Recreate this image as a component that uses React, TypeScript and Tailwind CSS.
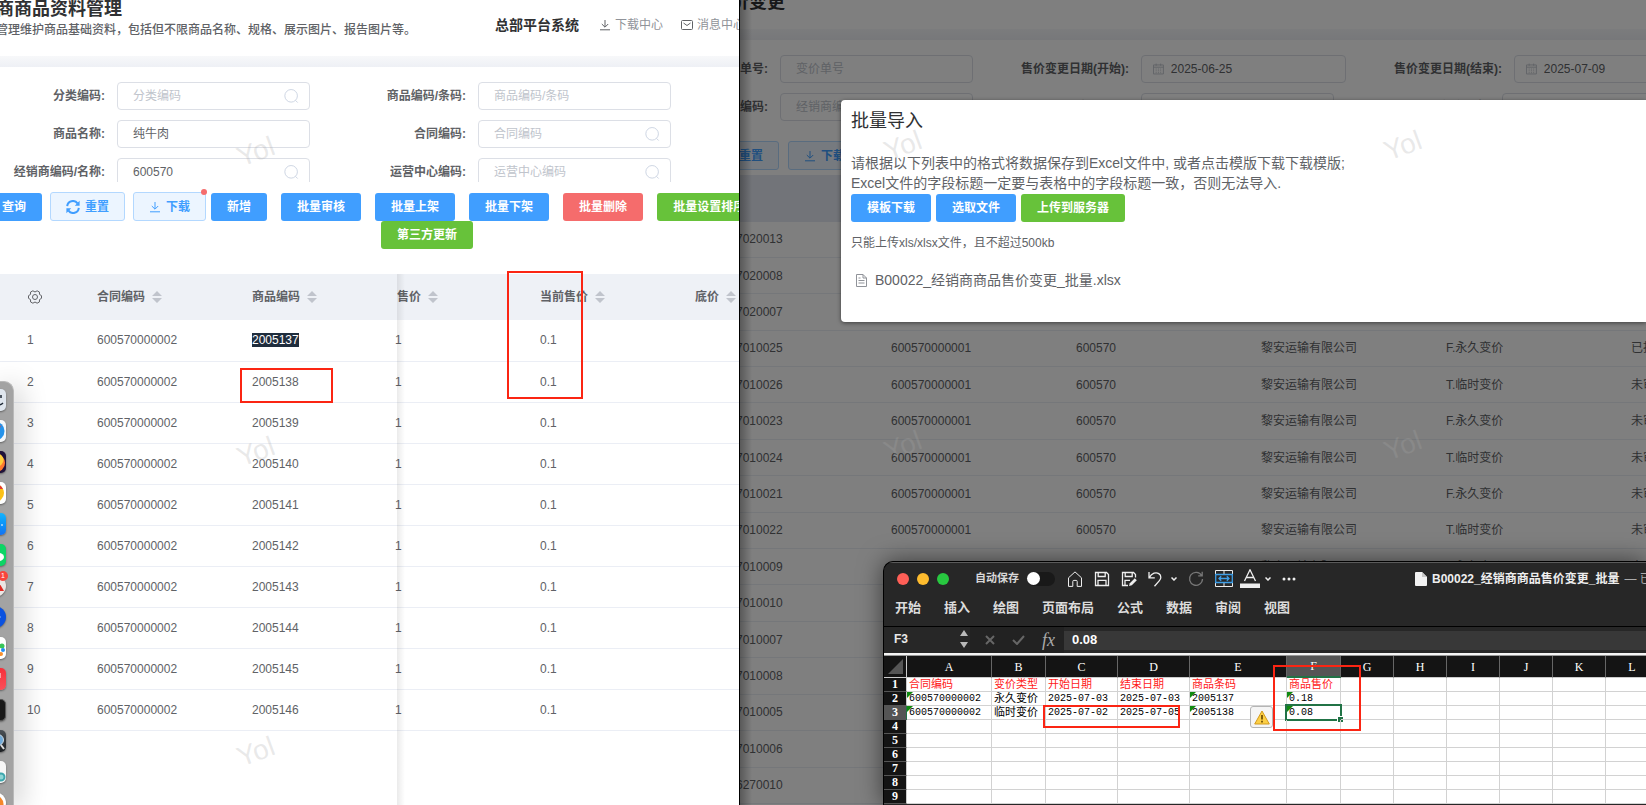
import type { ReactNode } from "react";
import clsx from "clsx";

const goods = [
  "2005137",
  "2005138",
  "2005139",
  "2005140",
  "2005141",
  "2005142",
  "2005143",
  "2005144",
  "2005145",
  "2005146",
];

const priceChanges = [
  { no: "7020013", type: "F.永久变价", status: "未审核" },
  { no: "7020008", type: "F.永久变价", status: "未审核" },
  { no: "7020007", type: "F.永久变价", status: "未审核" },
  { no: "7010025", type: "F.永久变价", status: "已批准" },
  { no: "7010026", type: "T.临时变价", status: "未审核" },
  { no: "7010023", type: "F.永久变价", status: "未审核" },
  { no: "7010024", type: "T.临时变价", status: "未审核" },
  { no: "7010021", type: "F.永久变价", status: "未审核" },
  { no: "7010022", type: "T.临时变价", status: "未审核" },
  { no: "7010009", type: "F.永久变价", status: "未审核" },
  { no: "7010010", type: "F.永久变价", status: "未审核" },
  { no: "7010007", type: "F.永久变价", status: "未审核" },
  { no: "7010008", type: "F.永久变价", status: "未审核" },
  { no: "7010005", type: "F.永久变价", status: "未审核" },
  { no: "7010006", type: "F.永久变价", status: "未审核" },
  { no: "6270010", type: "F.永久变价", status: "未审核" },
];

const ribbonTabs = ["开始", "插入", "绘图", "页面布局", "公式", "数据", "审阅", "视图"];

const sheetColumns = ["A", "B", "C", "D", "E", "F", "G", "H", "I", "J", "K", "L"];
const sheetRows = [
  ["合同编码", "变价类型", "开始日期", "结束日期", "商品条码", "商品售价"],
  ["600570000002", "永久变价", "2025-07-03", "2025-07-03", "2005137", "0.18"],
  ["600570000002", "临时变价", "2025-07-02", "2025-07-05", "2005138", "0.08"],
  [],
  [],
  [],
  [],
  [],
  [],
];

/* ---------- shared parts ---------- */

function SearchIcon() {
  return (
    <svg viewBox="0 0 16 16" className="size-4 fill-none stroke-[#c9d2e0]">
      <circle cx="7.8" cy="7.8" r="6.9" />
      <path d="M12.6 12.8 15 15.2" />
    </svg>
  );
}

function DownloadIcon({ className }: { className?: string }) {
  return (
    <svg viewBox="0 0 12 12" className={clsx("fill-none stroke-current", className)}>
      <path d="M6 1v7M2.8 5 6 8.2 9.2 5M1 10.8h10" />
    </svg>
  );
}

function CalendarIcon() {
  return (
    <svg viewBox="0 0 12 12" className="size-3 fill-none stroke-[#c0c4cc]">
      <path d="M.5 1.5h11v10H.5zM.5 4h11M3.5 0v2.5M8.5 0v2.5" />
      <path d="M3 6h6M3 8h6M3 10h6" strokeDasharray="1 1.5" />
    </svg>
  );
}

function SortIcon() {
  return (
    <svg viewBox="0 0 10 12" className="ml-[7px] h-3 w-[10px] shrink-0 fill-[#c0c4cc]">
      <path d="M5 0l5 5H0zM5 12l5-5H0z" />
    </svg>
  );
}

function Watermark({ className }: { className: string }) {
  return (
    <span
      aria-hidden="true"
      className={clsx(
        "pointer-events-none absolute -rotate-[20deg] text-[28px] leading-8 text-[#a8a8a8]/25",
        className
      )}
    >
      Yol
    </span>
  );
}

type FieldProps = {
  id: string;
  label: string;
  placeholder?: string;
  value?: string;
  search?: boolean;
  date?: boolean;
};

function Field({ id, label, placeholder, value, search, date }: FieldProps) {
  return (
    <div className="flex h-7 items-center justify-end gap-3">
      <label htmlFor={id} className="text-xs font-bold whitespace-nowrap text-[#606266]">
        {label}:
      </label>
      <div
        className={clsx(
          "flex h-7 shrink-0 items-center rounded border border-[#dcdfe6] bg-white pr-[10px]",
          date ? "w-[205px] gap-[7px] pl-[11px]" : "w-[193px] pl-[15px]"
        )}
      >
        {date && <CalendarIcon />}
        <input
          id={id}
          type="text"
          defaultValue={value}
          placeholder={placeholder}
          className="w-full min-w-0 bg-transparent text-xs text-[#606266] outline-none placeholder:text-[#c0c4cc]"
        />
        {search && <SearchIcon />}
      </div>
    </div>
  );
}

type ButtonProps = {
  tone?: "primary" | "danger" | "success";
  children: ReactNode;
};

function Button({ tone = "primary", children }: ButtonProps) {
  return (
    <button
      type="button"
      className={clsx(
        "h-7 shrink-0 rounded-[3px] px-4 text-xs font-bold whitespace-nowrap text-white",
        tone === "primary" && "bg-[#409eff]",
        tone === "danger" && "bg-[#f56c6c]",
        tone === "success" && "bg-[#67c23a]"
      )}
    >
      {children}
    </button>
  );
}

function PlainButton({ children }: { children: ReactNode }) {
  return (
    <button
      type="button"
      className="relative flex h-[29px] shrink-0 items-center gap-[5px] rounded-[3px] border border-[#b3d8ff] bg-[#ecf5ff] px-[15px] text-xs font-bold whitespace-nowrap text-[#409eff]"
    >
      {children}
    </button>
  );
}

function RefreshIcon() {
  return (
    <svg viewBox="0 0 14 14" className="size-[14px] fill-none stroke-current stroke-2">
      <path d="M1.2 6.2A5.7 5.7 0 0 1 11.5 3.4M12.8 7.8A5.7 5.7 0 0 1 2.5 10.6" />
      <path d="M13.6.8v5H8.8zM.4 13.2v-5h4.8z" className="fill-current stroke-none" />
    </svg>
  );
}

/* ---------- goods window ---------- */

function GoodsWindow() {
  return (
    <section className="relative w-[739px] shrink-0 overflow-hidden bg-white">
      <header className="flex h-14 justify-between overflow-hidden">
        <div className="-ml-1 whitespace-nowrap">
          <h1 className="text-lg leading-[18px] font-bold text-[#303133]">商商品资料管理</h1>
          <p className="mt-1 text-xs leading-4 font-medium text-[#606266]">
            管理维护商品基础资料，包括但不限商品名称、规格、展示图片、报告图片等。
          </p>
        </div>
        <nav className="-mr-[6px] flex h-[50px] shrink-0 items-center whitespace-nowrap">
          <strong className="text-sm text-[#303133]">总部平台系统</strong>
          <a href="#download" className="ml-5 flex items-center gap-1 text-xs text-[#909399]">
            <DownloadIcon className="size-3 text-[#606266]" />
            下载中心
          </a>
          <a href="#message" className="ml-[18px] flex items-center gap-1 text-xs text-[#909399]">
            <svg viewBox="0 0 12 10" className="h-[10px] w-3 fill-none stroke-[#606266]">
              <rect x=".5" y=".5" width="11" height="9" rx="1" />
              <path d="M2.5 3 6 5.5 9.5 3" />
            </svg>
            消息中心
          </a>
        </nav>
      </header>
      <div className="h-[11px] bg-linear-to-b from-[#f7f8fa] to-[#eef0f5]" />

      <form className="grid h-[115px] grid-cols-[310px_361px] content-start gap-y-[10px] overflow-hidden pt-[15px]">
        <Field id="category" label="分类编码" placeholder="分类编码" search />
        <Field id="barcode" label="商品编码/条码" placeholder="商品编码/条码" />
        <Field id="name" label="商品名称" value="纯牛肉" />
        <Field id="contract" label="合同编码" placeholder="合同编码" search />
        <Field id="dealer" label="经销商编码/名称" value="600570" search />
        <Field id="center" label="运营中心编码" placeholder="运营中心编码" search />
      </form>

      <div className="mt-[10px] -ml-[14px] flex items-end">
        <div className="mr-[5px] flex items-end gap-2">
          <Button>查询</Button>
          <PlainButton>
            <RefreshIcon />
            重置
          </PlainButton>
          <PlainButton>
            <DownloadIcon className="size-3" />
            下载
            <i className="absolute -top-1 -right-[2px] size-[6px] rounded-full bg-[#f56c6c]" />
          </PlainButton>
        </div>
        <div className="flex gap-[14px]">
          <Button>新增</Button>
          <Button>批量审核</Button>
          <Button>批量上架</Button>
          <Button>批量下架</Button>
          <Button tone="danger">批量删除</Button>
          <Button tone="success">批量设置排序</Button>
        </div>
      </div>
      <div className="pl-[381px]">
        <Button tone="success">第三方更新</Button>
      </div>

      <div className="relative mt-[25px]">
        <table className="w-[840px] table-fixed border-collapse text-left text-xs text-[#606266]">
          <colgroup>
            <col className="w-[87px]" />
            <col className="w-[155px]" />
            <col className="w-[153px]" />
            <col className="w-[135px]" />
            <col className="w-[155px]" />
            <col className="w-[155px]" />
          </colgroup>
          <thead>
            <tr className="h-[46px] bg-[#eef1f6]">
              <th className="pl-7">
                <svg viewBox="0 0 14 14" className="size-[14px] fill-none stroke-[#606266]">
                  <path d="M4.9.8 7 2 9.1.8 11.4 2l.1 2.4 2 1.3v2.6l-2 1.3-.1 2.4-2.3 1.2L7 12l-2.1 1.2L2.6 12l-.1-2.4-2-1.3V5.7l2-1.3L2.6 2z" />
                  <circle cx="7" cy="7" r="2.5" />
                </svg>
              </th>
              {["合同编码", "商品编码"].map((title) => (
                <th key={title} className="pl-[10px]">
                  <span className="flex items-center">
                    {title}
                    <SortIcon />
                  </span>
                </th>
              ))}
              <th className="pl-[2px]">
                <span className="flex items-center">
                  售价
                  <SortIcon />
                </span>
              </th>
              {["当前售价", "底价"].map((title) => (
                <th key={title} className="pl-[10px]">
                  <span className="flex items-center">
                    {title}
                    <SortIcon />
                  </span>
                </th>
              ))}
            </tr>
          </thead>
          <tbody>
            {goods.map((code, index) => (
              <tr key={code} className="h-[41px] border-b border-[#ebeef5]">
                <td className="pl-[27px]">{index + 1}</td>
                <td className="pl-[10px]">600570000002</td>
                <td className="pl-[10px]">
                  <span className={clsx(index === 0 && "bg-[#1f2d3d] text-white")}>{code}</span>
                </td>
                <td>1</td>
                <td className="pl-[10px]">0.1</td>
                <td />
              </tr>
            ))}
          </tbody>
        </table>
        {/* shadow of the fixed columns */}
        <div className="absolute top-0 left-[397px] h-[600px] w-2 bg-linear-to-r from-black/8 to-transparent" />
        <div className="absolute top-[94px] left-60 h-[35px] w-[93px] border-2 border-[#fb2513]" />
        <div className="absolute -top-[3px] left-[507px] h-32 w-[76px] border-2 border-[#fb2513]" />
      </div>

      <Watermark className="top-[136px] left-[237px]" />
      <Watermark className="top-[436px] left-[237px]" />
      <Watermark className="top-[736px] left-[237px]" />
    </section>
  );
}

/* ---------- price change window ---------- */

function PriceWindow() {
  return (
    <section className="relative min-w-0 flex-1 overflow-hidden border-l border-black bg-white">
      <header className="h-[29px] overflow-hidden">
        <h1 className="-mt-2 -ml-[9px] text-lg leading-5 font-bold text-[#303133]">价变更</h1>
      </header>
      <div className="h-[11px] bg-linear-to-b from-[#f7f8fa] to-[#eef0f5]" />

      <form className="pt-[15px]">
        <div className="grid w-[979px] grid-cols-[233px_373px_373px]">
          <Field id="order" label="单号" placeholder="变价单号" />
          <Field id="start" label="售价变更日期(开始)" value="2025-06-25" date />
          <Field id="end" label="售价变更日期(结束)" value="2025-07-09" date />
        </div>
        <div className="mt-[10px] grid w-[955px] grid-cols-[233px_361px_361px]">
          <Field id="order-dealer" label="编码" placeholder="经销商编码" />
          <Field id="order-type" label="变价类型" placeholder="变价类型" />
          <Field id="order-status" label="审核状态" placeholder="审核状态" />
        </div>
      </form>

      <div className="mt-5 -ml-9 flex gap-[9px]">
        <PlainButton>
          <RefreshIcon />
          重置
        </PlainButton>
        <PlainButton>
          <DownloadIcon className="size-3" />
          下载
        </PlainButton>
      </div>

      <table className="mt-[5px] -ml-1 h-[629px] w-[1070px] table-fixed border-collapse text-left text-xs text-[#606266]">
        <colgroup>
          <col className="w-[145px]" />
          <col className="w-[185px]" />
          <col className="w-[185px]" />
          <col className="w-[185px]" />
          <col className="w-[185px]" />
          <col className="w-[185px]" />
        </colgroup>
        <thead>
          <tr className="h-[47px] bg-[#e4e8f3]">
            <th />
            <th className="pl-[10px]">合同编码</th>
            <th className="pl-[10px]">经销商编码</th>
            <th className="pl-[10px]">经销商名称</th>
            <th className="pl-[10px]">变价类型</th>
            <th className="pl-[10px]">状态</th>
          </tr>
        </thead>
        <tbody>
          {priceChanges.map((row) => (
            <tr key={row.no} className="border-b border-[#ebeef5]">
              <td>{row.no}</td>
              <td className="pl-[10px]">600570000001</td>
              <td className="pl-[10px]">600570</td>
              <td className="pl-[10px]">黎安运输有限公司</td>
              <td className="pl-[10px]">{row.type}</td>
              <td className="pl-[10px]">{row.status}</td>
            </tr>
          ))}
        </tbody>
      </table>

      <div className="absolute inset-0 bg-black/50" />
      <div className="absolute inset-y-0 left-0 w-3 bg-linear-to-r from-black/30 to-transparent" />
      <ImportDialog />

      <Watermark className="top-[130px] left-[144px]" />
      <Watermark className="top-[130px] left-[644px]" />
      <Watermark className="top-[430px] left-[144px]" />
      <Watermark className="top-[430px] left-[644px]" />
    </section>
  );
}

function ImportDialog() {
  return (
    <div
      role="dialog"
      aria-label="批量导入"
      className="absolute top-[100px] right-0 left-[101px] h-[222px] rounded-l-sm bg-white px-[10px] pt-[11px] whitespace-nowrap text-[#606266] shadow-[0_1px_4px_rgba(0,0,0,0.5)]"
    >
      <h2 className="text-lg leading-5 text-[#303133]">批量导入</h2>
      <p className="mt-[22px] text-sm leading-5">
        请根据以下列表中的格式将数据保存到Excel文件中, 或者点击模版下载下载模版;
        <br />
        Excel文件的字段标题一定要与表格中的字段标题一致，否则无法导入.
      </p>
      <div className="mt-[1px] flex gap-[5px]">
        <Button>模板下载</Button>
        <Button>选取文件</Button>
        <Button tone="success">上传到服务器</Button>
      </div>
      <p className="mt-3 text-xs leading-[18px]">只能上传xls/xlsx文件，且不超过500kb</p>
      <a href="#file" className="mt-[18px] ml-[5px] flex items-center gap-2 text-sm leading-5">
        <svg viewBox="0 0 11 13" className="h-[13px] w-[11px] fill-none stroke-[#909399]">
          <path d="M.5.5h6.5l3.5 3.5v8.5H.5zM7 .5V4h3.5M2.5 4h2M2.5 6.5h6M2.5 9h6" />
        </svg>
        B00022_经销商商品售价变更_批量.xlsx
      </a>
    </div>
  );
}

/* ---------- spreadsheet window ---------- */

function ChevronIcon() {
  return (
    <svg viewBox="0 0 6 4" className="h-1 w-[6px] fill-none stroke-current stroke-[1.5]">
      <path d="m.5.5 2.500 2.500L5.500.5" />
    </svg>
  );
}

function TitleBar() {
  return (
    <div className="flex h-[31px] items-center pl-[13px] text-[#eee]">
      <div className="flex shrink-0 gap-2">
        <i className="size-3 rounded-full bg-[#ff5f57]" />
        <i className="size-3 rounded-full bg-[#febc2e]" />
        <i className="size-3 rounded-full bg-[#28c840]" />
      </div>
      <label
        htmlFor="autosave"
        className="ml-[26px] shrink-0 text-[11px] font-bold whitespace-nowrap text-[#d8d8d8]"
      >
        自动保存
      </label>
      <input
        id="autosave"
        type="checkbox"
        className="ml-2 h-[14px] w-7 shrink-0 appearance-none rounded-full bg-[#191919] before:block before:size-[13px] before:rounded-full before:bg-white"
      />
      <div className="ml-3 flex shrink-0 items-center gap-[11px]">
        <button type="button" aria-label="主页">
          <svg viewBox="0 0 16 16" className="size-4 fill-none stroke-current">
            <path d="M1.5 6.8 8 .9l6.5 5.9v8.6h-4.3v-5a1 1 0 0 0-1-1H6.8a1 1 0 0 0-1 1v5H1.5z" />
          </svg>
        </button>
        <button type="button" aria-label="保存">
          <svg viewBox="0 0 16 16" className="size-4 fill-none stroke-current stroke-[1.3]">
            <path d="M1.5 1.5h11l2 2v11h-13zM4.2 1.5v4h7v-4M4 14.5v-5.2h8v5.2" />
          </svg>
        </button>
        <button type="button" aria-label="另存为">
          <svg viewBox="0 0 16 16" className="size-4 fill-none stroke-current stroke-[1.3]">
            <path d="M7 14.5H1.5v-13h11l2 2v3M4.2 1.5v4h7v-4M4 14.5V9.3h5" />
            <path d="m8 15 .8-2.8 5-5 2 2-5 5z" className="fill-current stroke-none" />
          </svg>
        </button>
        <button type="button" aria-label="撤消" className="flex items-center gap-[9px]">
          <svg viewBox="0 0 14 16" className="h-4 w-[14px] fill-none stroke-current stroke-[1.3]">
            <path d="M1 1v5.8h5.8M1.2 6.6C4 2 8 .8 10.800 2.600c3 2 2.200 5.400.6 7L6.500 15.200" />
          </svg>
          <ChevronIcon />
        </button>
        <button type="button" aria-label="恢复" className="text-[#777]">
          <svg viewBox="0 0 16 16" className="size-4 fill-none stroke-current stroke-[1.3]">
            <path d="M13.600 4.500A6.500 6.500 0 1 0 14.500 8M14.200.8v4h-4" />
          </svg>
        </button>
        <button type="button" aria-label="合并单元格">
          <svg viewBox="0 0 18 17" className="h-[17px] w-[18px] fill-none stroke-current">
            <path d="M.5 4V.5h17V4M.5 13v3.500h17V13M9 .5V4M9 13v3.500" />
            <path
              d="M.7 4.500h16.600v8H.7zM4 8.500h10M6.200 6.300 4 8.500l2.200 2.200M11.800 6.300 14 8.500l-2.200 2.200"
              className="stroke-[#3f9fe8] stroke-[1.3]"
            />
          </svg>
        </button>
        <button type="button" aria-label="字体颜色" className="-ml-1 flex items-center gap-[5px]">
          <svg viewBox="0 0 20 19" className="h-[19px] w-5 fill-none stroke-current stroke-[1.3]">
            <path d="M4.500 12 10 .8 15.500 12M6.500 8.500h7" />
            <path d="M0 14.500h20V19H0z" className="fill-current stroke-none" />
          </svg>
          <ChevronIcon />
        </button>
        <button type="button" aria-label="更多">
          <svg viewBox="0 0 14 4" className="h-1 w-[14px] fill-current">
            <circle cx="2" cy="2" r="1.5" />
            <circle cx="7" cy="2" r="1.5" />
            <circle cx="12" cy="2" r="1.5" />
          </svg>
        </button>
      </div>
      <div className="ml-[119px] flex shrink-0 items-center gap-[5px] text-xs font-bold whitespace-nowrap">
        <svg viewBox="0 0 12 14" className="h-[14px] w-3 fill-[#f2f2f2]">
          <path d="M1 0h6l5 5v8a1 1 0 0 1-1 1H1a1 1 0 0 1-1-1V1a1 1 0 0 1 1-1z" />
          <path d="M7 0v5h5z" className="fill-[#c8c8c8]" />
        </svg>
        B00022_经销商商品售价变更_批量 <span className="font-normal text-[#aaa]">— 已保存</span>
      </div>
    </div>
  );
}

function FormulaBar() {
  return (
    <div className="flex h-[27px] items-center border-t border-black bg-[#272727] text-white">
      <div className="flex h-full w-[86px] shrink-0 items-center justify-between pr-[2px] pb-[2px] pl-[10px]">
        <input
          type="text"
          aria-label="名称框"
          defaultValue="F3"
          className="w-12 bg-transparent text-xs font-bold text-[#e8e8e8] outline-none"
        />
        <svg viewBox="0 0 8 18" className="h-[18px] w-2 fill-[#bbb]">
          <path d="M4 0l4 6H0zM4 18l4-6H0z" />
        </svg>
      </div>
      <div className="flex h-full w-[94px] shrink-0 items-center gap-[17px] bg-[#222] pl-[15px]">
        <svg viewBox="0 0 10 10" className="size-[10px] fill-none stroke-[#666] stroke-2">
          <path d="m1 1 8 8M9 1 1 9" />
        </svg>
        <svg viewBox="0 0 13 10" className="h-[10px] w-[13px] fill-none stroke-[#666] stroke-2">
          <path d="M1 5l4 4 7-8" />
        </svg>
        <i className="font-['Liberation_Serif',serif] text-lg leading-5 text-[#aaa]">fx</i>
      </div>
      <input
        type="text"
        aria-label="编辑栏"
        defaultValue="0.08"
        className="h-[19px] min-w-0 flex-1 bg-[#383838] pl-2 text-[13px] font-bold outline-none"
      />
    </div>
  );
}

function Sheet() {
  return (
    <table className="w-[775px] table-fixed border-separate border-spacing-0 bg-white text-black">
      <colgroup>
        <col className="w-[23px]" />
        <col className="w-[85px]" />
        <col className="w-[54px]" />
        <col className="w-[72px]" />
        <col className="w-[72px]" />
        <col className="w-[97px]" />
        <col className="w-[54px]" />
        <col span={6} className="w-[53px]" />
      </colgroup>
      <thead>
        <tr className="h-[22px] bg-[#141414] font-['Liberation_Serif',serif] text-xs leading-3 text-white">
          <th className="border-r border-b border-[#ccc]">
            <svg viewBox="0 0 15 15" className="ml-1 size-[15px] fill-[#555]">
              <path d="M15 0v15H0z" />
            </svg>
          </th>
          {sheetColumns.map((name) => (
            <th
              key={name}
              className={clsx(
                "border-r border-r-[#666] font-normal",
                name === "F" ? "border-b-2 border-b-[#217346] bg-[#555]" : "border-b border-b-[#ccc]"
              )}
            >
              {name}
            </th>
          ))}
        </tr>
      </thead>
      <tbody>
        {sheetRows.map((cells, row) => (
          <tr key={row} className="h-[14px] text-[11px] leading-[13px]">
            <th
              className={clsx(
                "border-r border-b border-b-[#555] font-['Liberation_Serif',serif] text-xs leading-[13px] text-white",
                row === 2 ? "border-r-[#217346] bg-[#555]" : "border-r-[#ccc] bg-[#141414]"
              )}
            >
              {row + 1}
            </th>
            {sheetColumns.map((name, col) => {
              const text = cells[col];
              const storedAsText = (row === 1 || row === 2) && [0, 4, 5].includes(col);
              const active = row === 2 && name === "F";

              return (
                <td
                  key={name}
                  className={clsx(
                    "relative border-r border-b border-[#d2d2d2] p-0 pl-[2px] whitespace-nowrap",
                    row === 0 && "text-[#ff1a1a]"
                  )}
                >
                  {storedAsText && (
                    <i className="absolute top-0 left-0 border-t-[6px] border-r-[6px] border-t-[#108a10] border-r-transparent" />
                  )}
                  {text && (
                    <span
                      className={clsx(
                        "relative block h-[13px]",
                        /\d/.test(text) ? "text-[10px] leading-[13px]" : "leading-[15px]"
                      )}
                    >
                      {text}
                    </span>
                  )}
                  {active && (
                    <i className="absolute -top-[2px] -right-[2px] -bottom-[2px] -left-[2px] border-2 border-[#217346]">
                      <b className="absolute -right-[3px] -bottom-[3px] size-[6px] border-t border-l border-white bg-[#217346]" />
                    </i>
                  )}
                </td>
              );
            })}
          </tr>
        ))}
      </tbody>
    </table>
  );
}

function SpreadsheetWindow() {
  return (
    <section className="absolute top-[561px] right-0 bottom-0 left-[883px] overflow-hidden rounded-tl-[10px] border-t border-l border-black bg-[#272727] shadow-[0_0_24px_rgba(0,0,0,0.55)]">
      <div className="border-t border-[#5a5a5a]">
        <TitleBar />
      </div>
      <nav className="flex h-8 items-center gap-[23px] pb-[5px] pl-[11px] text-[13px] font-bold text-[#dcdcdc]">
        {ribbonTabs.map((tab) => (
          <button key={tab} type="button">
            {tab}
          </button>
        ))}
      </nav>
      <FormulaBar />
      <div className="h-[3px] border-t-2 border-[#f4f4f4] bg-[#999]" />
      <div className="relative font-['Liberation_Mono','Noto_Sans_CJK_SC',monospace]">
        <Sheet />
        <button
          type="button"
          aria-label="错误检查"
          className="absolute top-[50px] left-[366px] flex h-[22px] w-[23px] items-center justify-center rounded-[3px] border border-[#b5b5b5] bg-[#f5f5f5]"
        >
          <svg viewBox="0 0 16 15" className="h-[15px] w-4">
            <path d="M8 1 15.300 14H.7z" className="fill-[#fccf45] stroke-[#d39a1c]" strokeLinejoin="round" />
            <path d="M8 5v4.500M8 10.800v1.700" className="fill-none stroke-[#6b4a00] stroke-[1.7]" />
          </svg>
        </button>
        <div className="absolute top-[49px] left-[159px] h-[23px] w-[137px] border-2 border-[#fb2513]" />
        <div className="absolute top-[9px] left-[389px] h-[66px] w-[88px] border-2 border-[#fb2513]" />
      </div>
    </section>
  );
}

/* ---------- dock ---------- */

const dockIcons: { name: string; tile: string; art: ReactNode }[] = [
  {
    name: "finder",
    tile: "bg-[#dfe6ee]",
    art: <path d="M17 6v3M14 16q3 0 5-2" className="fill-none stroke-[#1c2733] stroke-[1.5]" />,
  },
  {
    name: "safari",
    tile: "bg-[#f4f6f8]",
    art: (
      <>
        <circle cx="11" cy="11" r="9.500" className="fill-[#2492ea]" />
        <path d="m10 10 8-5-6 7z" className="fill-[#e8443a]" />
      </>
    ),
  },
  {
    name: "firefox",
    tile: "bg-[#20123a]",
    art: (
      <>
        <circle cx="12" cy="12" r="9" className="fill-[#ff7a2f]" />
        <circle cx="13" cy="9" r="6.500" className="fill-[#ffcf3a]" />
      </>
    ),
  },
  {
    name: "chrome",
    tile: "bg-white",
    art: (
      <>
        <circle cx="11" cy="11" r="9" className="fill-[#fbc116]" />
        <path d="M4 5a9 9 0 0 1 15 2h-8z" className="fill-[#e33b2e]" />
      </>
    ),
  },
  {
    name: "store",
    tile: "bg-linear-to-b from-[#14b4fd] to-[#1572f2]",
    art: <path d="M17 12h2" className="stroke-white stroke-1" />,
  },
  {
    name: "wechat",
    tile: "bg-[#0cd565]",
    art: <ellipse cx="15" cy="13" rx="5" ry="4" className="fill-white" />,
  },
  {
    name: "todo",
    tile: "bg-[#ece6e4]",
    art: <path d="M13 4 20 16h-4l-4-4z" className="fill-[#e22b25]" />,
  },
  {
    name: "meeting",
    tile: "bg-[#0b52e0]",
    art: <path d="M15 11h2" className="stroke-[#7fb0ff] stroke-1" />,
  },
  {
    name: "photos",
    tile: "bg-white",
    art: (
      <>
        <circle cx="18" cy="9" r="2.500" className="fill-[#37c559]" />
        <circle cx="19" cy="13" r="2" className="fill-[#1f8df5]" />
        <circle cx="17" cy="17" r="2" className="fill-[#f7902e]" />
      </>
    ),
  },
  {
    name: "music",
    tile: "bg-linear-to-b from-[#f72f3a] to-[#fb4f59]",
    art: <path d="M16 5v5" className="stroke-white stroke-1" />,
  },
  {
    name: "terminal",
    tile: "border border-[#555] bg-[#171717]",
    art: null,
  },
  {
    name: "preview",
    tile: "bg-linear-to-b from-[#4b5157] to-[#1c1f22]",
    art: (
      <>
        <circle cx="14" cy="10" r="5.500" className="fill-[#6fa9d8] stroke-[#ccd6de]" />
        <path d="m17 15 3 4" className="stroke-[#dcdcdc] stroke-2" />
      </>
    ),
  },
  {
    name: "notes",
    tile: "bg-[#f7f7f7]",
    art: <circle cx="17" cy="16" r="3.500" className="fill-[#8fd6d6] stroke-[#3ca6ad] stroke-2" />,
  },
  {
    name: "player",
    tile: "bg-white",
    art: <circle cx="11" cy="12" r="8.500" className="fill-[#f5872b]" />,
  },
];

function Dock() {
  return (
    <aside className="absolute top-[381px] bottom-0 left-0 w-[14px] rounded-tr-[10px] border-t border-r border-[#b9b9b9] bg-[#a3a3a3] pt-[7px] shadow-[4px_4px_28px_rgba(0,0,0,0.28)]">
      <div className="-ml-4 flex flex-col gap-[9px]">
        {dockIcons.map(({ name, tile, art }) => (
          <div
            key={name}
            className={clsx(
              "relative size-[22px] shrink-0 shadow-[0_1px_2px_rgba(0,0,0,0.4)]",
              name === "meeting" || name === "todo" || name === "player" ? "rounded-full" : "rounded-[5px]",
              tile
            )}
          >
            <svg viewBox="0 0 22 22" className="size-full">
              {art}
            </svg>
            {name === "todo" && (
              <span className="absolute -top-1 -right-[2px] size-[10px] rounded-full bg-[#f8453c] text-center text-[7px] leading-[10px] text-white">
                1
              </span>
            )}
          </div>
        ))}
      </div>
    </aside>
  );
}

export default function App() {
  return (
    <main
      lang="zh-CN"
      className="relative flex h-screen overflow-hidden font-['Liberation_Sans','Noto_Sans_CJK_SC',sans-serif]"
    >
      <GoodsWindow />
      <PriceWindow />
      <SpreadsheetWindow />
      <Dock />
    </main>
  );
}
